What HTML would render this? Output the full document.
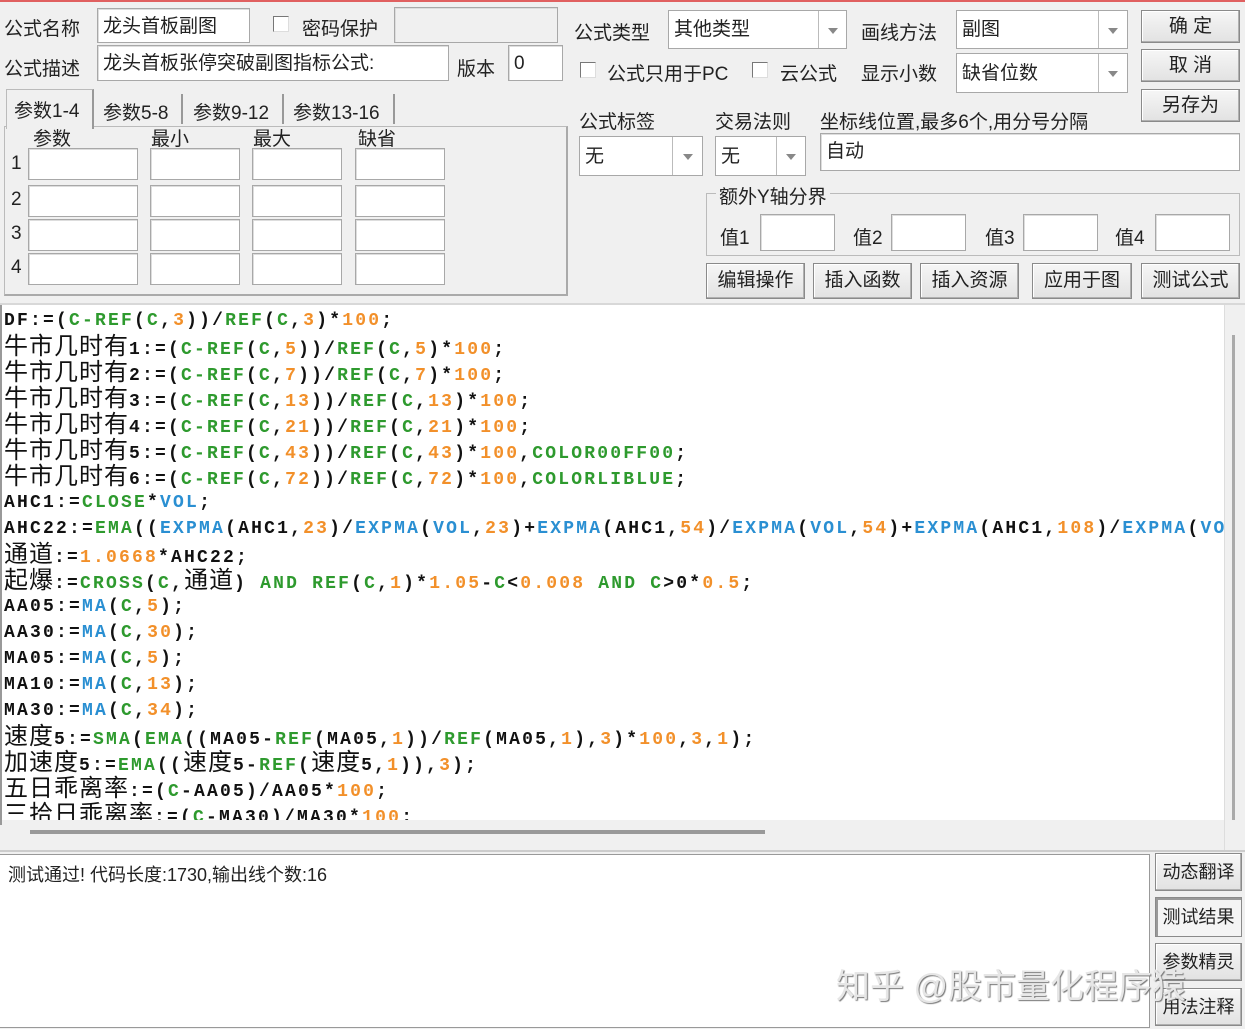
<!DOCTYPE html>
<html><head><meta charset="utf-8">
<style>
*{box-sizing:border-box;margin:0;padding:0}
body{width:1245px;height:1029px;background:#f0f0f0;position:relative;overflow:hidden;font-family:"Liberation Sans","Noto Sans CJK SC",sans-serif;font-size:19px;color:#222}
.a{position:absolute;white-space:nowrap}
.inp{position:absolute;background:#fff;border:1px solid #a8a8a8;box-shadow:inset 1px 1px 0 #ddd;padding:6px 5px 0;font-size:19px;line-height:24px}
.dis{background:#f0f0f0}
.dd{position:absolute;background:#fff;border:1px solid #a8a8a8;padding:7px 5px 0;font-size:19px;line-height:24px}
.dd .sep{position:absolute;top:0;bottom:0;border-left:1px solid #bbb;right:0;background:#fff}
.dd .sep:after{content:"";position:absolute;left:50%;top:50%;margin:-2px 0 0 -5px;border-left:5px solid transparent;border-right:5px solid transparent;border-top:6px solid #888}
.btn{position:absolute;background:linear-gradient(#f6f6f6,#e2e2e2);border:1px solid #8a8a8a;box-shadow:inset -1px -1px 0 #b0b0b0,inset 1px 1px 0 #fff;text-align:center;font-size:19px;color:#222}
.cb{position:absolute;width:16px;height:16px;background:#fff;border:1px solid #777;border-right-color:#ddd;border-bottom-color:#ddd}
#code{position:absolute;left:0;top:305px;width:1224px;height:520px;background:#fff;overflow:hidden;border-left:2px solid #999;padding-top:3px}
#code div{height:26px;line-height:26px;font-family:"Liberation Mono",monospace;font-weight:bold;font-size:18px;letter-spacing:2.2px;padding-left:2px;white-space:nowrap;color:#111}
.k{font-family:"Liberation Sans","Noto Sans CJK SC",sans-serif;font-weight:normal;font-size:24px;letter-spacing:1px}
.g{color:#2e9a2e}.o{color:#f2902a}.b{color:#2a8fd2}
</style></head><body>
<div style="position:absolute;left:0;top:0;width:1245px;height:2px;background:#e06060"></div>

<div class="a" style="left:4px;top:14px">公式名称</div>
<div class="inp" style="left:97px;top:8px;width:153px;height:35px">龙头首板副图</div>
<div class="cb" style="left:273px;top:16px"></div>
<div class="a" style="left:302px;top:14px">密码保护</div>
<div class="inp dis" style="left:394px;top:7px;width:164px;height:36px"></div>
<div class="a" style="left:4px;top:54px">公式描述</div>
<div class="inp" style="left:97px;top:45px;width:352px;height:36px">龙头首板张停突破副图指标公式:</div>
<div class="a" style="left:457px;top:54px">版本</div>
<div class="inp" style="left:508px;top:45px;width:55px;height:36px">0</div>

<div style="position:absolute;left:4px;top:126px;width:564px;height:170px;border:1px solid #bbb;border-right:2px solid #aaa;border-bottom:2px solid #aaa"></div>
<div style="position:absolute;left:6px;top:89px;width:88px;height:40px;background:#f0f0f0;border:1px solid #bbb;border-bottom:none;border-right:2px solid #999"></div>
<div class="a" style="left:14px;top:96px">参数1-4</div>
<div class="a" style="left:103px;top:98px">参数5-8</div>
<div style="position:absolute;left:181px;top:94px;height:30px;border-left:2px solid #999"></div>
<div class="a" style="left:193px;top:98px">参数9-12</div>
<div style="position:absolute;left:282px;top:94px;height:30px;border-left:2px solid #999"></div>
<div class="a" style="left:293px;top:98px">参数13-16</div>
<div style="position:absolute;left:393px;top:94px;height:30px;border-left:2px solid #999"></div>
<div class="a" style="left:33px;top:124px">参数</div>
<div class="a" style="left:151px;top:124px">最小</div>
<div class="a" style="left:253px;top:124px">最大</div>
<div class="a" style="left:358px;top:124px">缺省</div>
<div class="a" style="left:11px;top:153px">1</div>
<div class="a" style="left:11px;top:189px">2</div>
<div class="a" style="left:11px;top:223px">3</div>
<div class="a" style="left:11px;top:257px">4</div>
<div class="inp" style="left:28px;top:148px;width:110px;height:32px"></div><div class="inp" style="left:150px;top:148px;width:90px;height:32px"></div><div class="inp" style="left:252px;top:148px;width:90px;height:32px"></div><div class="inp" style="left:355px;top:148px;width:90px;height:32px"></div>
<div class="inp" style="left:28px;top:185px;width:110px;height:32px"></div><div class="inp" style="left:150px;top:185px;width:90px;height:32px"></div><div class="inp" style="left:252px;top:185px;width:90px;height:32px"></div><div class="inp" style="left:355px;top:185px;width:90px;height:32px"></div>
<div class="inp" style="left:28px;top:219px;width:110px;height:32px"></div><div class="inp" style="left:150px;top:219px;width:90px;height:32px"></div><div class="inp" style="left:252px;top:219px;width:90px;height:32px"></div><div class="inp" style="left:355px;top:219px;width:90px;height:32px"></div>
<div class="inp" style="left:28px;top:253px;width:110px;height:32px"></div><div class="inp" style="left:150px;top:253px;width:90px;height:32px"></div><div class="inp" style="left:252px;top:253px;width:90px;height:32px"></div><div class="inp" style="left:355px;top:253px;width:90px;height:32px"></div>

<div class="a" style="left:574px;top:18px">公式类型</div>
<div class="dd" style="left:668px;top:10px;width:179px;height:39px">其他类型<div class="sep" style="width:28px"></div></div>
<div class="a" style="left:861px;top:18px">画线方法</div>
<div class="dd" style="left:956px;top:10px;width:172px;height:39px">副图<div class="sep" style="width:29px"></div></div>
<div class="btn" style="left:1141px;top:10px;width:99px;height:33px;line-height:31px">确&nbsp;定</div>
<div class="btn" style="left:1141px;top:49px;width:99px;height:33px;line-height:31px">取&nbsp;消</div>
<div class="btn" style="left:1141px;top:89px;width:99px;height:33px;line-height:31px">另存为</div>
<div class="cb" style="left:580px;top:62px"></div>
<div class="a" style="left:607px;top:59px">公式只用于PC</div>
<div class="cb" style="left:752px;top:62px"></div>
<div class="a" style="left:780px;top:59px">云公式</div>
<div class="a" style="left:861px;top:59px">显示小数</div>
<div class="dd" style="left:956px;top:53px;width:172px;height:40px;padding-top:8px">缺省位数<div class="sep" style="width:29px"></div></div>
<div class="a" style="left:579px;top:107px">公式标签</div>
<div class="a" style="left:715px;top:107px">交易法则</div>
<div class="a" style="left:820px;top:107px">坐标线位置,最多6个,用分号分隔</div>
<div class="dd" style="left:579px;top:136px;width:124px;height:40px;padding-top:8px">无<div class="sep" style="width:30px"></div></div>
<div class="dd" style="left:715px;top:136px;width:91px;height:40px;padding-top:8px">无<div class="sep" style="width:29px"></div></div>
<div class="inp" style="left:820px;top:133px;width:420px;height:38px">自动</div>
<div style="position:absolute;left:706px;top:193px;width:534px;height:63px;border:1px solid #bbb"></div>
<div class="a" style="left:716px;top:182px;background:#f0f0f0;padding:0 3px">额外Y轴分界</div>
<div class="a" style="left:720px;top:223px">值1</div><div class="inp" style="left:760px;top:214px;width:75px;height:37px"></div>
<div class="a" style="left:853px;top:223px">值2</div><div class="inp" style="left:891px;top:214px;width:75px;height:37px"></div>
<div class="a" style="left:985px;top:223px">值3</div><div class="inp" style="left:1023px;top:214px;width:75px;height:37px"></div>
<div class="a" style="left:1115px;top:223px">值4</div><div class="inp" style="left:1155px;top:214px;width:75px;height:37px"></div>
<div class="btn" style="left:706px;top:263px;width:99px;height:36px;line-height:34px">编辑操作</div>
<div class="btn" style="left:813px;top:263px;width:99px;height:36px;line-height:34px">插入函数</div>
<div class="btn" style="left:920px;top:263px;width:99px;height:36px;line-height:34px">插入资源</div>
<div class="btn" style="left:1032px;top:263px;width:100px;height:36px;line-height:34px">应用于图</div>
<div class="btn" style="left:1141px;top:263px;width:99px;height:36px;line-height:34px">测试公式</div>
<div style="position:absolute;left:0;top:303px;width:1245px;height:2px;background:#d8d8d8"></div>

<div id="code">
<div>DF:=(<span class="g">C-REF</span>(<span class="g">C</span>,<span class="o">3</span>))/<span class="g">REF</span>(<span class="g">C</span>,<span class="o">3</span>)*<span class="o">100</span>;</div>
<div><span class="k">牛市几时有</span>1:=(<span class="g">C-REF</span>(<span class="g">C</span>,<span class="o">5</span>))/<span class="g">REF</span>(<span class="g">C</span>,<span class="o">5</span>)*<span class="o">100</span>;</div>
<div><span class="k">牛市几时有</span>2:=(<span class="g">C-REF</span>(<span class="g">C</span>,<span class="o">7</span>))/<span class="g">REF</span>(<span class="g">C</span>,<span class="o">7</span>)*<span class="o">100</span>;</div>
<div><span class="k">牛市几时有</span>3:=(<span class="g">C-REF</span>(<span class="g">C</span>,<span class="o">13</span>))/<span class="g">REF</span>(<span class="g">C</span>,<span class="o">13</span>)*<span class="o">100</span>;</div>
<div><span class="k">牛市几时有</span>4:=(<span class="g">C-REF</span>(<span class="g">C</span>,<span class="o">21</span>))/<span class="g">REF</span>(<span class="g">C</span>,<span class="o">21</span>)*<span class="o">100</span>;</div>
<div><span class="k">牛市几时有</span>5:=(<span class="g">C-REF</span>(<span class="g">C</span>,<span class="o">43</span>))/<span class="g">REF</span>(<span class="g">C</span>,<span class="o">43</span>)*<span class="o">100</span>,<span class="g">COLOR00FF00</span>;</div>
<div><span class="k">牛市几时有</span>6:=(<span class="g">C-REF</span>(<span class="g">C</span>,<span class="o">72</span>))/<span class="g">REF</span>(<span class="g">C</span>,<span class="o">72</span>)*<span class="o">100</span>,<span class="g">COLORLIBLUE</span>;</div>
<div>AHC1:=<span class="g">CLOSE</span>*<span class="b">VOL</span>;</div>
<div>AHC22:=<span class="g">EMA</span>((<span class="b">EXPMA</span>(AHC1,<span class="o">23</span>)/<span class="b">EXPMA</span>(<span class="b">VOL</span>,<span class="o">23</span>)+<span class="b">EXPMA</span>(AHC1,<span class="o">54</span>)/<span class="b">EXPMA</span>(<span class="b">VOL</span>,<span class="o">54</span>)+<span class="b">EXPMA</span>(AHC1,<span class="o">108</span>)/<span class="b">EXPMA</span>(<span class="b">VOL</span>,<span class="o">108</span>))/3,2);</div>
<div><span class="k">通道</span>:=<span class="o">1.0668</span>*AHC22;</div>
<div><span class="k">起爆</span>:=<span class="g">CROSS</span>(<span class="g">C</span>,<span class="k">通道</span>) <span class="g">AND REF</span>(<span class="g">C</span>,<span class="o">1</span>)*<span class="o">1.05</span>-<span class="g">C</span>&lt;<span class="o">0.008</span> <span class="g">AND C</span>&gt;0*<span class="o">0.5</span>;</div>
<div>AA05:=<span class="b">MA</span>(<span class="g">C</span>,<span class="o">5</span>);</div>
<div>AA30:=<span class="b">MA</span>(<span class="g">C</span>,<span class="o">30</span>);</div>
<div>MA05:=<span class="b">MA</span>(<span class="g">C</span>,<span class="o">5</span>);</div>
<div>MA10:=<span class="b">MA</span>(<span class="g">C</span>,<span class="o">13</span>);</div>
<div>MA30:=<span class="b">MA</span>(<span class="g">C</span>,<span class="o">34</span>);</div>
<div><span class="k">速度</span>5:=<span class="g">SMA</span>(<span class="g">EMA</span>((MA05-<span class="g">REF</span>(MA05,<span class="o">1</span>))/<span class="g">REF</span>(MA05,<span class="o">1</span>),<span class="o">3</span>)*<span class="o">100</span>,<span class="o">3</span>,<span class="o">1</span>);</div>
<div><span class="k">加速度</span>5:=<span class="g">EMA</span>((<span class="k">速度</span>5-<span class="g">REF</span>(<span class="k">速度</span>5,<span class="o">1</span>)),<span class="o">3</span>);</div>
<div><span class="k">五日乖离率</span>:=(<span class="g">C</span>-AA05)/AA05*<span class="o">100</span>;</div>
<div><span class="k">三拾日乖离率</span>:=(<span class="g">C</span>-MA30)/MA30*<span class="o">100</span>;</div>
</div>
<div style="position:absolute;left:2px;top:820px;width:1222px;height:30px;background:#f0f0f0"></div>
<div style="position:absolute;left:30px;top:830px;width:735px;height:4px;background:#999"></div>
<div style="position:absolute;left:1224px;top:305px;width:21px;height:545px;background:#f0f0f0;border-left:1px solid #ddd"></div>
<div style="position:absolute;left:1232px;top:335px;width:3px;height:485px;background:#aaa"></div>
<div style="position:absolute;left:0;top:850px;width:1245px;height:2px;background:#ccc"></div>

<div style="position:absolute;left:0;top:854px;width:1150px;height:174px;background:#fff;border:1px solid #999;border-left:none"></div>
<div class="a" style="left:8px;top:861px;font-size:18px">测试通过! 代码长度:1730,输出线个数:16</div>
<div class="btn" style="left:1155px;top:853px;width:87px;height:38px;line-height:36px;font-size:18px">动态翻译</div>
<div class="btn" style="left:1155px;top:897px;width:87px;height:40px;line-height:38px;font-size:18px;background:#f4f4f4;box-shadow:inset 2px 2px 0 #999">测试结果</div>
<div class="btn" style="left:1155px;top:943px;width:87px;height:38px;line-height:36px;font-size:18px">参数精灵</div>
<div class="btn" style="left:1155px;top:988px;width:87px;height:38px;line-height:36px;font-size:18px">用法注释</div>
<div class="a" style="left:836px;top:959px;font-size:34px;color:#e6e6e6;text-shadow:1px 1px 1px #777">知乎 @股市量化程序猿</div>
</body></html>
